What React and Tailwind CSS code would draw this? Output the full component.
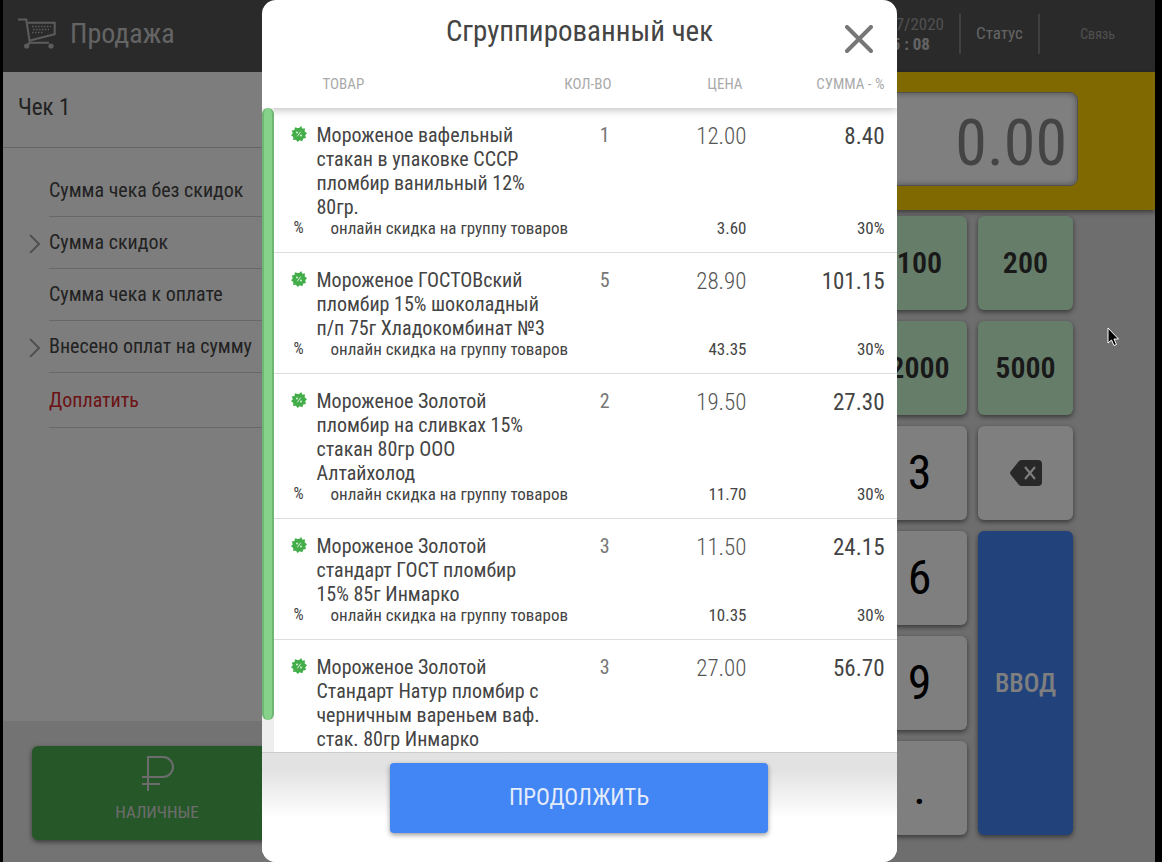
const items = [
  { name: 'Мороженое вафельный стакан в упаковке СССР пломбир ванильный 12% 80гр.', qty: 1, price: '12.00', sum: '8.40', discount: '3.60' },
  { name: 'Мороженое ГОСТОВский пломбир 15% шоколадный п/п 75г Хладокомбинат №3', qty: 5, price: '28.90', sum: '101.15', discount: '43.35' },
  { name: 'Мороженое Золотой пломбир на сливках 15% стакан 80гр ООО Алтайхолод', qty: 2, price: '19.50', sum: '27.30', discount: '11.70' },
  { name: 'Мороженое Золотой стандарт ГОСТ пломбир 15% 85г Инмарко', qty: 3, price: '11.50', sum: '24.15', discount: '10.35' },
  { name: 'Мороженое Золотой Стандарт Натур пломбир с черничным вареньем ваф. стак. 80гр Инмарко', qty: 3, price: '27.00', sum: '56.70' },
];

const totals = [
  { label: 'Сумма чека без скидок' },
  { label: 'Сумма скидок', expandable: true },
  { label: 'Сумма чека к оплате' },
  { label: 'Внесено оплат на сумму', expandable: true },
];

function CartIcon() {
  return (
    <svg className="h-8 w-[38px] shrink-0" viewBox="0 0 38 32" fill="none" stroke="#b8b8b8" strokeWidth="2" aria-hidden="true">
      <path d="M0 1.500h8.300l3.500 23.200H31" />
      <path d="M10 4.700h26.700v11.600L12 22.500" />
      <path d="M14 8.500h19M15 11.500h16M14 14.500h11" strokeDasharray="1.500 1.500" strokeWidth="1.500" />
      <circle cx="8.700" cy="28" r="2.600" fill="#b8b8b8" stroke="none" />
      <circle cx="33" cy="28" r="2.600" fill="#b8b8b8" stroke="none" />
      <path d="M12.500 24l-3 3" />
    </svg>
  );
}

function BadgeIcon() {
  return (
    <svg className="h-4 w-4" viewBox="0 0 16 16" aria-hidden="true">
      <path
        fill="#43ae49"
        d="M8 2L10.300 0l.8 2.600 3-.2-.5 2.900L16 7.200l-1.800 2 .8 2.800-2.700.4-1 2.800-2.600-1L6.500 16l-1.500-2.300-2.800.3.1-2.900L0 9.200l1.800-2L.7 4.600l2.800-.6.4-2.800 2.700.8z"
      />
      <path d="M6.300 10.300l3.400-4.600" stroke="#d5f0d6" strokeWidth="1" />
      <circle cx="6" cy="6.500" r="1" fill="#d5f0d6" />
      <circle cx="10" cy="9.500" r="1" fill="#d5f0d6" />
    </svg>
  );
}

function Key({ className, children, ...props }) {
  return (
    <button type="button" className={`flex items-center justify-center rounded-md shadow-[0_2px_5px_rgba(0,0,0,0.5)] ${className}`} {...props}>
      {children}
    </button>
  );
}

function Header() {
  return (
    <header className="flex h-[72px] shrink-0 items-center bg-[#555555] pb-1 pl-[15px] text-[#c8c8c8]">
      <CartIcon />
      <h1 className="ml-[14px] grow text-[28px] leading-8">Продажа</h1>
      <div className="w-[75px] text-center text-[17px] leading-5">
        <p className="text-right text-[#a0a0a0]">07/2020</p>
        <p className="font-bold">15 : 08</p>
      </div>
      <a href="#status" className="ml-[15px] flex h-10 w-[81px] items-center justify-center border-x-2 border-[#808080] text-[17px]">Статус</a>
      <p className="w-[115px] text-center text-sm text-[#a0a0a0]">Связь</p>
    </header>
  );
}

function Receipt() {
  return (
    <section className="flex w-1/2 flex-col bg-[#fafafa] text-[#444444]">
      <h2 className="flex h-[76px] items-center border-b border-[#c8c8c8] pb-[2px] pl-[15px] text-[23px]">Чек 1</h2>
      <ul className="grow pt-[17px] pl-[22px] text-xl">
        {totals.map((row) => (
          <li key={row.label} className="flex h-[52px] items-center">
            <span className="flex w-6 shrink-0">
              {row.expandable && (
                <svg className="h-5 w-5" viewBox="0 0 20 20" fill="none" stroke="#a0a0a0" strokeWidth="2" aria-hidden="true">
                  <path d="M5 2l9 9-9 9" />
                </svg>
              )}
            </span>
            <span className="flex h-full grow items-center border-b border-[#d0d0d0] pb-[2px]">{row.label}</span>
          </li>
        ))}
        <li className="ml-6 flex h-[55px] items-center border-b border-[#d0d0d0] text-[#d8262c]">Доплатить</li>
      </ul>
      <div className="h-[141px] bg-[#e6e6e6] pt-[25px] pl-[29px]">
        <button type="button" className="flex h-[94px] w-[250px] flex-col items-center rounded-md bg-[#4caf50] pt-2 text-[17px] text-[#d8d8d8] shadow-[0_2px_5px_rgba(0,0,0,0.5)]">
          <svg className="mb-[6px] h-10 w-9" viewBox="0 0 36 40" fill="none" stroke="currentColor" strokeWidth="2" aria-hidden="true">
            <path d="M9 37V3h15a10 10 0 0 1 0 20H3M3 30h18" />
          </svg>
          НАЛИЧНЫЕ
        </button>
      </div>
    </section>
  );
}

function Keypad() {
  return (
    <section className="flex w-1/2 flex-col bg-[#dcdcdc]">
      <div className="flex h-[138px] justify-end bg-[#ffd200] pt-5 pr-[77px] shadow-[0_2px_5px_rgba(0,0,0,0.5)]">
        <output className="flex h-[94px] w-[400px] items-center justify-end rounded-lg border border-[#a0a0a0] bg-white pt-[10px] pr-[10px] text-[64px] text-[#888888] shadow-[inset_0_0_6px_rgba(0,0,0,0.4)]">
          0.00
        </output>
      </div>
      <div className="mt-[6px] mr-[82px] ml-auto grid auto-rows-[94px] grid-cols-[95px_95px] gap-[11px] text-5xl text-black">
        <Key className="bg-[#ccfad4] text-3xl font-semibold text-[#333333]">100</Key>
        <Key className="bg-[#ccfad4] text-3xl font-semibold text-[#333333]">200</Key>
        <Key className="bg-[#ccfad4] text-3xl font-semibold text-[#333333]">2000</Key>
        <Key className="bg-[#ccfad4] text-3xl font-semibold text-[#333333]">5000</Key>
        <Key className="bg-white">3</Key>
        <Key className="bg-white" aria-label="Удалить">
          <svg className="h-[26px] w-8" viewBox="0 0 32 26" aria-hidden="true">
            <path fill="#505050" d="M12 0h16a4 4 0 0 1 4 4v18a4 4 0 0 1-4 4H12q-2 0-3-1L1 15q-2-2 0-4L9 1q1-1 3-1z" />
            <path d="M15 7l10 12M25 7L15 19" stroke="#ffffff" strokeWidth="2" />
          </svg>
        </Key>
        <Key className="bg-white">6</Key>
        <Key className="row-span-3 bg-[#4285f4] text-[26px] font-medium text-white">ВВОД</Key>
        <Key className="bg-white">9</Key>
        <Key className="bg-white">.</Key>
      </div>
    </section>
  );
}

function GroupedReceipt() {
  return (
    <div role="dialog" aria-labelledby="dialog-title" className="relative flex h-full w-[635px] flex-col overflow-hidden rounded-[14px] bg-white text-[#444444]">
      <div className="flex h-[60px] shrink-0 items-start pt-3 pr-6 pl-[53px]">
        <h2 id="dialog-title" className="grow text-center text-[29px] leading-[38px]">Сгруппированный чек</h2>
        <button type="button" aria-label="Закрыть" className="mt-[13px] shrink-0">
          <svg className="h-7 w-7" viewBox="0 0 28 28" fill="none" stroke="#777777" strokeWidth="4" strokeLinecap="round" aria-hidden="true">
            <path d="M2 2l24 24M26 2L2 26" />
          </svg>
        </button>
      </div>
      <div className="relative min-h-0 grow overflow-hidden">
        <table className="w-full table-fixed border-separate border-spacing-0">
          <colgroup>
            <col className="w-[55px]" />
            <col className="w-[240px]" />
            <col className="w-[55px]" />
            <col className="w-[135px]" />
            <col />
          </colgroup>
          <thead className="text-[15px] text-[#aaaaaa] shadow-[0_2px_8px_rgba(0,0,0,0.25)]">
            <tr className="h-12">
              <th />
              <th className="pl-[6px] text-left font-normal">ТОВАР</th>
              <th className="text-right font-normal">КОЛ-ВО</th>
              <th className="pr-1 text-right font-normal">ЦЕНА</th>
              <th className="pr-3 text-right font-normal">СУММА - %</th>
            </tr>
          </thead>
          {items.map((item, i) => (
            <tbody key={i}>
              <tr className="align-top text-[23px] leading-7">
                <td className="pt-[18px] pl-[29px]"><BadgeIcon /></td>
                <td className="pt-[15px] pr-2 text-xl leading-6">{item.name}</td>
                <td className="pt-[15px] pr-[2px] text-right text-xl leading-6 text-[#777777]">{item.qty}</td>
                <td className="pt-[15px] text-right font-light text-[#555555]">{item.price}</td>
                <td className="pt-[15px] pr-3 text-right">{item.sum}</td>
              </tr>
              {item.discount && (
                <tr className="text-[17px] leading-[18px]">
                  <td className="border-b border-[#dddddd] pb-[15px] pl-8 text-base leading-[18px]">%</td>
                  <td colSpan={2} className="border-b border-[#dddddd] pb-[15px] pl-[14px]">онлайн скидка на группу товаров</td>
                  <td className="border-b border-[#dddddd] pb-[15px] text-right">{item.discount}</td>
                  <td className="border-b border-[#dddddd] pr-3 pb-[15px] text-right">30%</td>
                </tr>
              )}
            </tbody>
          ))}
        </table>
        <div className="absolute top-12 bottom-0 left-0 w-3 bg-[#eeeeee]">
          <div className="h-[95%] rounded-md border-x-2 border-[#6fb573] bg-[#86d28a]" />
        </div>
      </div>
      <div className="flex h-[110px] shrink-0 justify-center border-t border-[#cccccc] bg-linear-to-b from-[#e2e2e2] from-15% to-white to-60% pt-[10px]">
        <button type="button" className="h-[70px] w-[378px] rounded bg-[#4285f4] text-[23px] text-[#e4ecfa] shadow-[0_2px_5px_rgba(0,0,0,0.4)]">
          ПРОДОЛЖИТЬ
        </button>
      </div>
    </div>
  );
}

export default function App() {
  return (
    <div className="relative h-screen overflow-hidden bg-black pr-[7px] pl-[3px] font-['Roboto_Condensed','Liberation_Sans_Narrow',Roboto,sans-serif]">
      <div className="flex h-full flex-col">
        <Header />
        <main className="flex grow">
          <Receipt />
          <Keypad />
        </main>
      </div>
      <div className="absolute inset-0 flex justify-center bg-black/50 pr-[7px] pl-[3px]">
        <GroupedReceipt />
      </div>
      {/* mouse pointer */}
      <svg className="absolute top-[327px] left-[1107px] h-5 w-3" viewBox="0 0 12 20" aria-hidden="true">
        <path d="M1 1v15l3.500-3 2.500 5.500 2.500-1L7 12h4.500z" fill="#000000" stroke="#ffffff" />
      </svg>
    </div>
  );
}
